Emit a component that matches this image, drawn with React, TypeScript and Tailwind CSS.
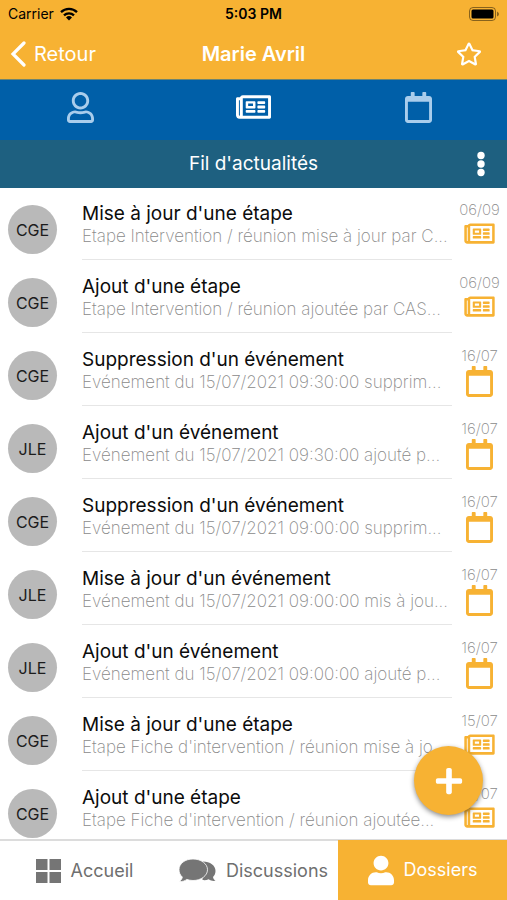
import { FaPlus, FaRegCalendar, FaRegNewspaper, FaRegStar, FaRegUser, FaUser } from "react-icons/fa"

type Entry = {
  who: string
  title: string
  detail: string
  date: string
  kind: "step" | "event"
}

const entries: Entry[] = [
  { who: "CGE", title: "Mise à jour d'une étape", detail: "Etape Intervention / réunion mise à jour par C...", date: "06/09", kind: "step" },
  { who: "CGE", title: "Ajout d'une étape", detail: "Etape Intervention / réunion ajoutée par CAS...", date: "06/09", kind: "step" },
  { who: "CGE", title: "Suppression d'un événement", detail: "Evénement du 15/07/2021 09:30:00 supprim...", date: "16/07", kind: "event" },
  { who: "JLE", title: "Ajout d'un événement", detail: "Evénement du 15/07/2021 09:30:00 ajouté p...", date: "16/07", kind: "event" },
  { who: "CGE", title: "Suppression d'un événement", detail: "Evénement du 15/07/2021 09:00:00 supprim...", date: "16/07", kind: "event" },
  { who: "JLE", title: "Mise à jour d'un événement", detail: "Evénement du 15/07/2021 09:00:00 mis à jou...", date: "16/07", kind: "event" },
  { who: "JLE", title: "Ajout d'un événement", detail: "Evénement du 15/07/2021 09:00:00 ajouté p...", date: "16/07", kind: "event" },
  { who: "CGE", title: "Mise à jour d'une étape", detail: "Etape Fiche d'intervention / réunion mise à jo...", date: "15/07", kind: "step" },
  { who: "CGE", title: "Ajout d'une étape", detail: "Etape Fiche d'intervention / réunion ajoutée...", date: "15/07", kind: "step" },
]

function StatusBar() {
  return (
    <div className="grid h-7 grid-cols-3 items-center px-2 text-sm text-black">
      <div className="flex items-center gap-1.5">
        <span>Carrier</span>
        <svg viewBox="0 0 18 14" className="h-3.5 w-[18px]" aria-hidden="true">
          <g fill="none" stroke="currentColor" strokeWidth="2.3">
            <path d="M1 5.2a11.5 11.5 0 0 1 16 0" />
            <path d="M4 8.4a7.2 7.2 0 0 1 10 0" />
          </g>
          <path d="M9 13.5 6 10.5a4.3 4.3 0 0 1 6 0z" fill="currentColor" />
        </svg>
      </div>
      <span className="text-center font-semibold">5:03 PM</span>
      <svg viewBox="0 0 30 14" className="h-3.5 w-[30px] justify-self-end" aria-hidden="true">
        <rect x="0.5" y="0.5" width="26" height="13" rx="3.5" fill="none" stroke="#000" strokeOpacity="0.45" />
        <rect x="2.5" y="2.5" width="22" height="9" rx="1.5" fill="#000" />
        <path d="M28 4.5v5q2-1 2-2.5t-2-2.5z" fill="#000" fillOpacity="0.45" />
      </svg>
    </div>
  )
}

function NavBar() {
  return (
    <div className="grid h-[51px] grid-cols-3 items-center text-white">
      <button type="button" className="flex items-center gap-2 pl-2.5 text-xl">
        <svg viewBox="0 0 16 26" className="h-[26px] w-4" aria-hidden="true">
          <path d="M14 2 3 13l11 11" fill="none" stroke="currentColor" strokeWidth="3.2" strokeLinecap="round" />
        </svg>
        Retour
      </button>
      <h1 className="text-center text-xl font-semibold">Marie Avril</h1>
      <button type="button" aria-label="Favori" className="justify-self-end pr-[25px]">
        <FaRegStar className="size-[26px]" />
      </button>
    </div>
  )
}

function TopTabs() {
  return (
    <nav className="grid h-[61px] grid-cols-3 border-t border-[#6d8470] bg-[#005fa8] pb-1.5 text-white">
      <button type="button" aria-label="Personne" className="flex items-center justify-center pr-2 text-[#a9cdec]">
        <FaRegUser className="h-[31px] w-[27px]" />
      </button>
      <button type="button" aria-label="Actualités" className="flex items-center justify-center">
        <FaRegNewspaper className="h-8 w-[35px]" />
      </button>
      <button type="button" aria-label="Agenda" className="flex items-center justify-center pr-2 text-[#a9cdec]">
        <FaRegCalendar className="h-[31px] w-[27px]" />
      </button>
    </nav>
  )
}

function Row({ entry }: { entry: Entry }) {
  return (
    <li className="flex h-[73px]">
      <div className="w-[82px] shrink-0 pt-[17px] pl-2">
        <div className="flex size-[49px] items-center justify-center rounded-full bg-[#b9b9b9] text-base text-[#1c1c1c]">
          {entry.who}
        </div>
      </div>
      <div className="h-[72px] min-w-0 flex-1 border-b border-[#e6e6e6] pt-3.5">
        <h3 className="truncate text-[19px] leading-6 text-[#0c0c0c]">{entry.title}</h3>
        <p className="truncate text-[17px] leading-5 font-extralight text-[#8a8a8a]">{entry.detail}</p>
      </div>
      <div className="flex w-[55px] shrink-0 flex-col items-center pt-3">
        <span className="text-[15px] leading-5 font-extralight text-[#8a8a8a]">{entry.date}</span>
        {entry.kind === "step" ? (
          <FaRegNewspaper className="h-[27px] w-[35px] text-[#f7b233]" />
        ) : (
          <FaRegCalendar className="h-[31px] w-[27px] text-[#f7b233]" />
        )}
      </div>
    </li>
  )
}

function BottomTabs() {
  return (
    <nav className="grid h-[61px] shrink-0 grid-cols-3 border-t-2 border-[#dcdcdc] bg-white text-lg text-[#6f6f6f]">
      <button type="button" className="flex items-center justify-center gap-2.5">
        <svg viewBox="0 0 25 24" className="h-6 w-[25px]" fill="#757575" aria-hidden="true">
          <path d="M0 0h11.5v11H0zM13.5 0H25v11H13.5zM0 13h11.5v11H0zM13.5 13H25v11H13.5z" />
        </svg>
        Accueil
      </button>
      <button type="button" className="flex items-center justify-center gap-2.5">
        <svg viewBox="0 0 37 23" className="h-[23px] w-[37px]" fill="#757575" aria-hidden="true">
          <path d="M24 2.5c7 0 12.500 4 12.500 9.500 0 2.500-1 4.500-2.500 6 .3 1.800 1.200 2.800 2.500 3.800-2.800.4-5-.3-6.800-1.500-2 .8-4 1-6.200.7z" />
          <path d="M14 0C6 0 0 4.600 0 10.700c0 3 1.200 5.500 3.300 7.300C3 20 2 21.300.4 22.500c3 .3 5.500-.6 7.400-2.100 1.900.7 4 1.100 6.200 1.100 8 0 14.500-4.800 14.500-10.800S22 0 14 0z" stroke="#fff" strokeWidth="0.8" />
        </svg>
        Discussions
      </button>
      <button type="button" aria-current="page" className="-mt-px flex items-center justify-center gap-2.5 bg-[#f7b233] text-white">
        <FaUser className="h-[31px] w-[26px]" />
        Dossiers
      </button>
    </nav>
  )
}

export default function App() {
  return (
    <div className="relative flex h-screen flex-col overflow-hidden bg-white font-['Inter',sans-serif]">
      <header className="shrink-0 bg-[#f7b233]">
        <StatusBar />
        <NavBar />
        <TopTabs />
        <div className="grid h-12 grid-cols-[1fr_auto_1fr] items-center bg-[#1e6080] text-white">
          <h2 className="col-start-2 text-[19px]">Fil d'actualités</h2>
          <button type="button" aria-label="Options" className="justify-self-end pr-[22px]">
            <svg viewBox="0 0 8 26" className="h-[26px] w-2" fill="currentColor" aria-hidden="true">
              <circle cx="4" cy="4.500" r="3.700" />
              <circle cx="4" cy="13" r="3.700" />
              <circle cx="4" cy="21.500" r="3.700" />
            </svg>
          </button>
        </div>
      </header>
      <ul className="min-h-0 flex-1 overflow-hidden">
        {entries.map((entry, i) => (
          <Row key={i} entry={entry} />
        ))}
      </ul>
      <button
        type="button"
        aria-label="Ajouter"
        className="absolute right-6 bottom-[85px] flex size-[69px] items-center justify-center rounded-full bg-[#f7b233] text-white shadow-[0_2px_5px_rgba(0,0,0,0.45)]"
      >
        <FaPlus className="size-[30px]" />
      </button>
      <BottomTabs />
    </div>
  )
}
